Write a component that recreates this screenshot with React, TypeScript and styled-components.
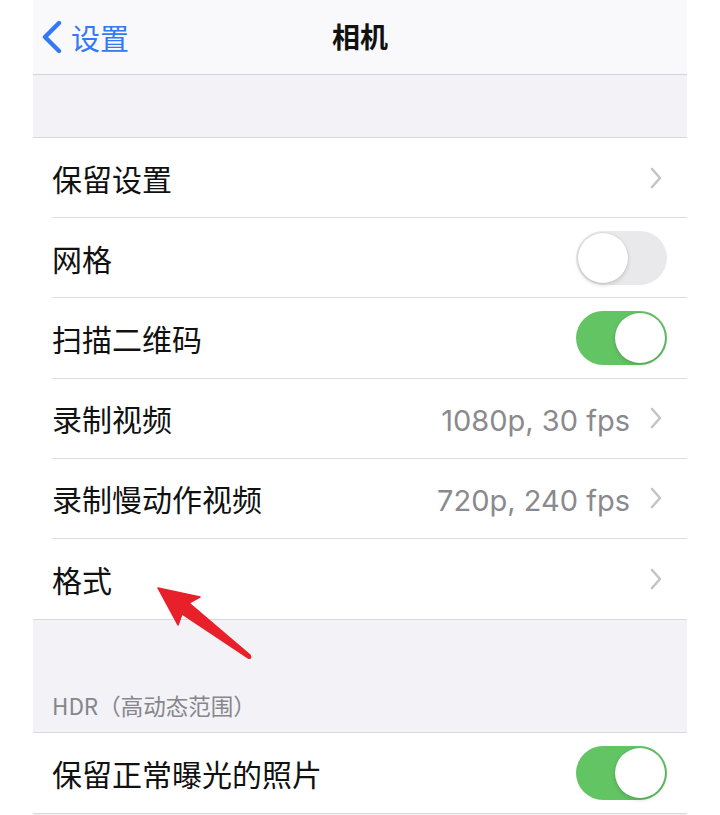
import React from "react";
import styled, { createGlobalStyle } from "styled-components";

const GlobalStyle = createGlobalStyle`
  html, body {
    margin: 0;
    padding: 0;
    background: #ffffff;
  }
  body {
    font-family: Inter, "Noto Sans CJK SC", sans-serif;
    -webkit-font-smoothing: antialiased;
  }
`;

const Screen = styled.div`
  position: relative;
  width: 654px;
  height: 815px;
  margin: 0 auto;
  background: #f2f2f7;
  overflow: hidden;
`;

const NavBar = styled.div`
  display: grid;
  grid-template-columns: 1fr auto 1fr;
  align-items: center;
  height: 75px;
  background: #f9f9fb;
  border-bottom: 1px solid #d6d6da;
  box-sizing: border-box;
`;

const BackButton = styled.div`
  display: flex;
  align-items: center;
  gap: 6px;
  padding-left: 6px;
  color: #3478f6;
  font-size: 29px;
  font-family: "Noto Sans CJK SC", sans-serif;
`;

const Title = styled.div`
  font-size: 28px;
  font-weight: 700;
  color: #111;
  font-family: "Noto Sans CJK SC", sans-serif;
  padding-bottom: 2px;
`;

const Spacer = styled.div<{ $h: number }>`
  height: ${(p) => p.$h}px;
`;

const SectionHeader = styled.div`
  display: flex;
  align-items: flex-end;
  height: 112px;
  padding: 0 19px 11px;
  box-sizing: border-box;
  color: #86868b;
  font-size: 22.5px;
  font-family: "Noto Sans CJK SC", sans-serif;
`;

const Group = styled.div`
  background: #ffffff;
  border-top: 1px solid #d8d8dc;
  border-bottom: 1px solid #d8d8dc;
`;

const Row = styled.div<{ $last?: boolean }>`
  display: flex;
  align-items: center;
  height: 80.2px;
  margin-left: 19px;
  padding-right: 20px;
  box-sizing: border-box;
  border-bottom: ${(p) => (p.$last ? "none" : "1px solid #dcdce0")};
`;

const Label = styled.div`
  flex: 1;
  font-size: 30px;
  color: #111;
  font-family: "Noto Sans CJK SC", sans-serif;
`;

const Value = styled.div`
  font-size: 29px;
  color: #8a8a8e;
  margin-right: 20px;
  padding-top: 4px;
`;

const Chevron = styled.svg`
  width: 12px;
  height: 22px;
  margin-right: 5px;
`;

const Track = styled.div<{ $on: boolean }>`
  position: relative;
  width: 91px;
  height: 54px;
  border-radius: 27px;
  background: ${(p) => (p.$on ? "#62c462" : "#e9e9eb")};
  flex-shrink: 0;
`;

const Knob = styled.div<{ $on: boolean }>`
  position: absolute;
  top: 2px;
  left: ${(p) => (p.$on ? "39px" : "2px")};
  width: 50px;
  height: 50px;
  border-radius: 50%;
  background: #ffffff;
  box-shadow: 0 2px 4px rgba(0, 0, 0, 0.15), 0 0 0 0.5px rgba(0, 0, 0, 0.08);
`;

const Arrow = styled.svg`
  position: absolute;
  left: 87px;
  top: 583px;
  width: 140px;
  height: 82px;
  pointer-events: none;
`;

const ChevronRight = () => (
  <Chevron viewBox="0 0 12 22">
    <path d="M2 2 L10 11 L2 20" fill="none" stroke="#c4c4c7" strokeWidth="2.6" strokeLinecap="round" strokeLinejoin="round" />
  </Chevron>
);

const Toggle: React.FC<{ on: boolean }> = ({ on }) => (
  <Track $on={on}>
    <Knob $on={on} />
  </Track>
);

type Item = { label: string; value?: string; toggle?: boolean; link?: boolean };

const items: Item[] = [
  { label: "保留设置", link: true },
  { label: "网格", toggle: false },
  { label: "扫描二维码", toggle: true },
  { label: "录制视频", value: "1080p, 30 fps", link: true },
  { label: "录制慢动作视频", value: "720p, 240 fps", link: true },
  { label: "格式", link: true },
];

const SettingRow: React.FC<{ item: Item; last?: boolean }> = ({ item, last }) => (
  <Row $last={last}>
    <Label>{item.label}</Label>
    {item.value && <Value>{item.value}</Value>}
    {item.link && <ChevronRight />}
    {item.toggle !== undefined && <Toggle on={item.toggle} />}
  </Row>
);

export default function App() {
  return (
    <>
      <GlobalStyle />
      <Screen>
        <NavBar>
          <BackButton>
            <svg width="26" height="34" viewBox="0 0 26 34">
              <path d="M20 3 L6 17 L20 31" fill="none" stroke="#3478f6" strokeWidth="4.4" strokeLinecap="round" strokeLinejoin="round" />
            </svg>
            设置
          </BackButton>
          <Title>相机</Title>
          <div />
        </NavBar>
        <Spacer $h={62} />
        <Group>
          {items.map((it, i) => (
            <SettingRow key={it.label} item={it} last={i === items.length - 1} />
          ))}
        </Group>
        <SectionHeader>HDR（高动态范围）</SectionHeader>
        <Group>
          <SettingRow item={{ label: "保留正常曝光的照片", toggle: true }} last />
        </Group>
        <Arrow viewBox="0 0 140 82">
          <path
            d="M38 5 L80 14 L69 20 L130 72 Q132 76 128 75 L62 31 L58 42 Z"
            fill="#e8202a"
            stroke="#e8202a"
            strokeWidth="1.5"
            strokeLinejoin="round"
          />
        </Arrow>
      </Screen>
    </>
  );
}
